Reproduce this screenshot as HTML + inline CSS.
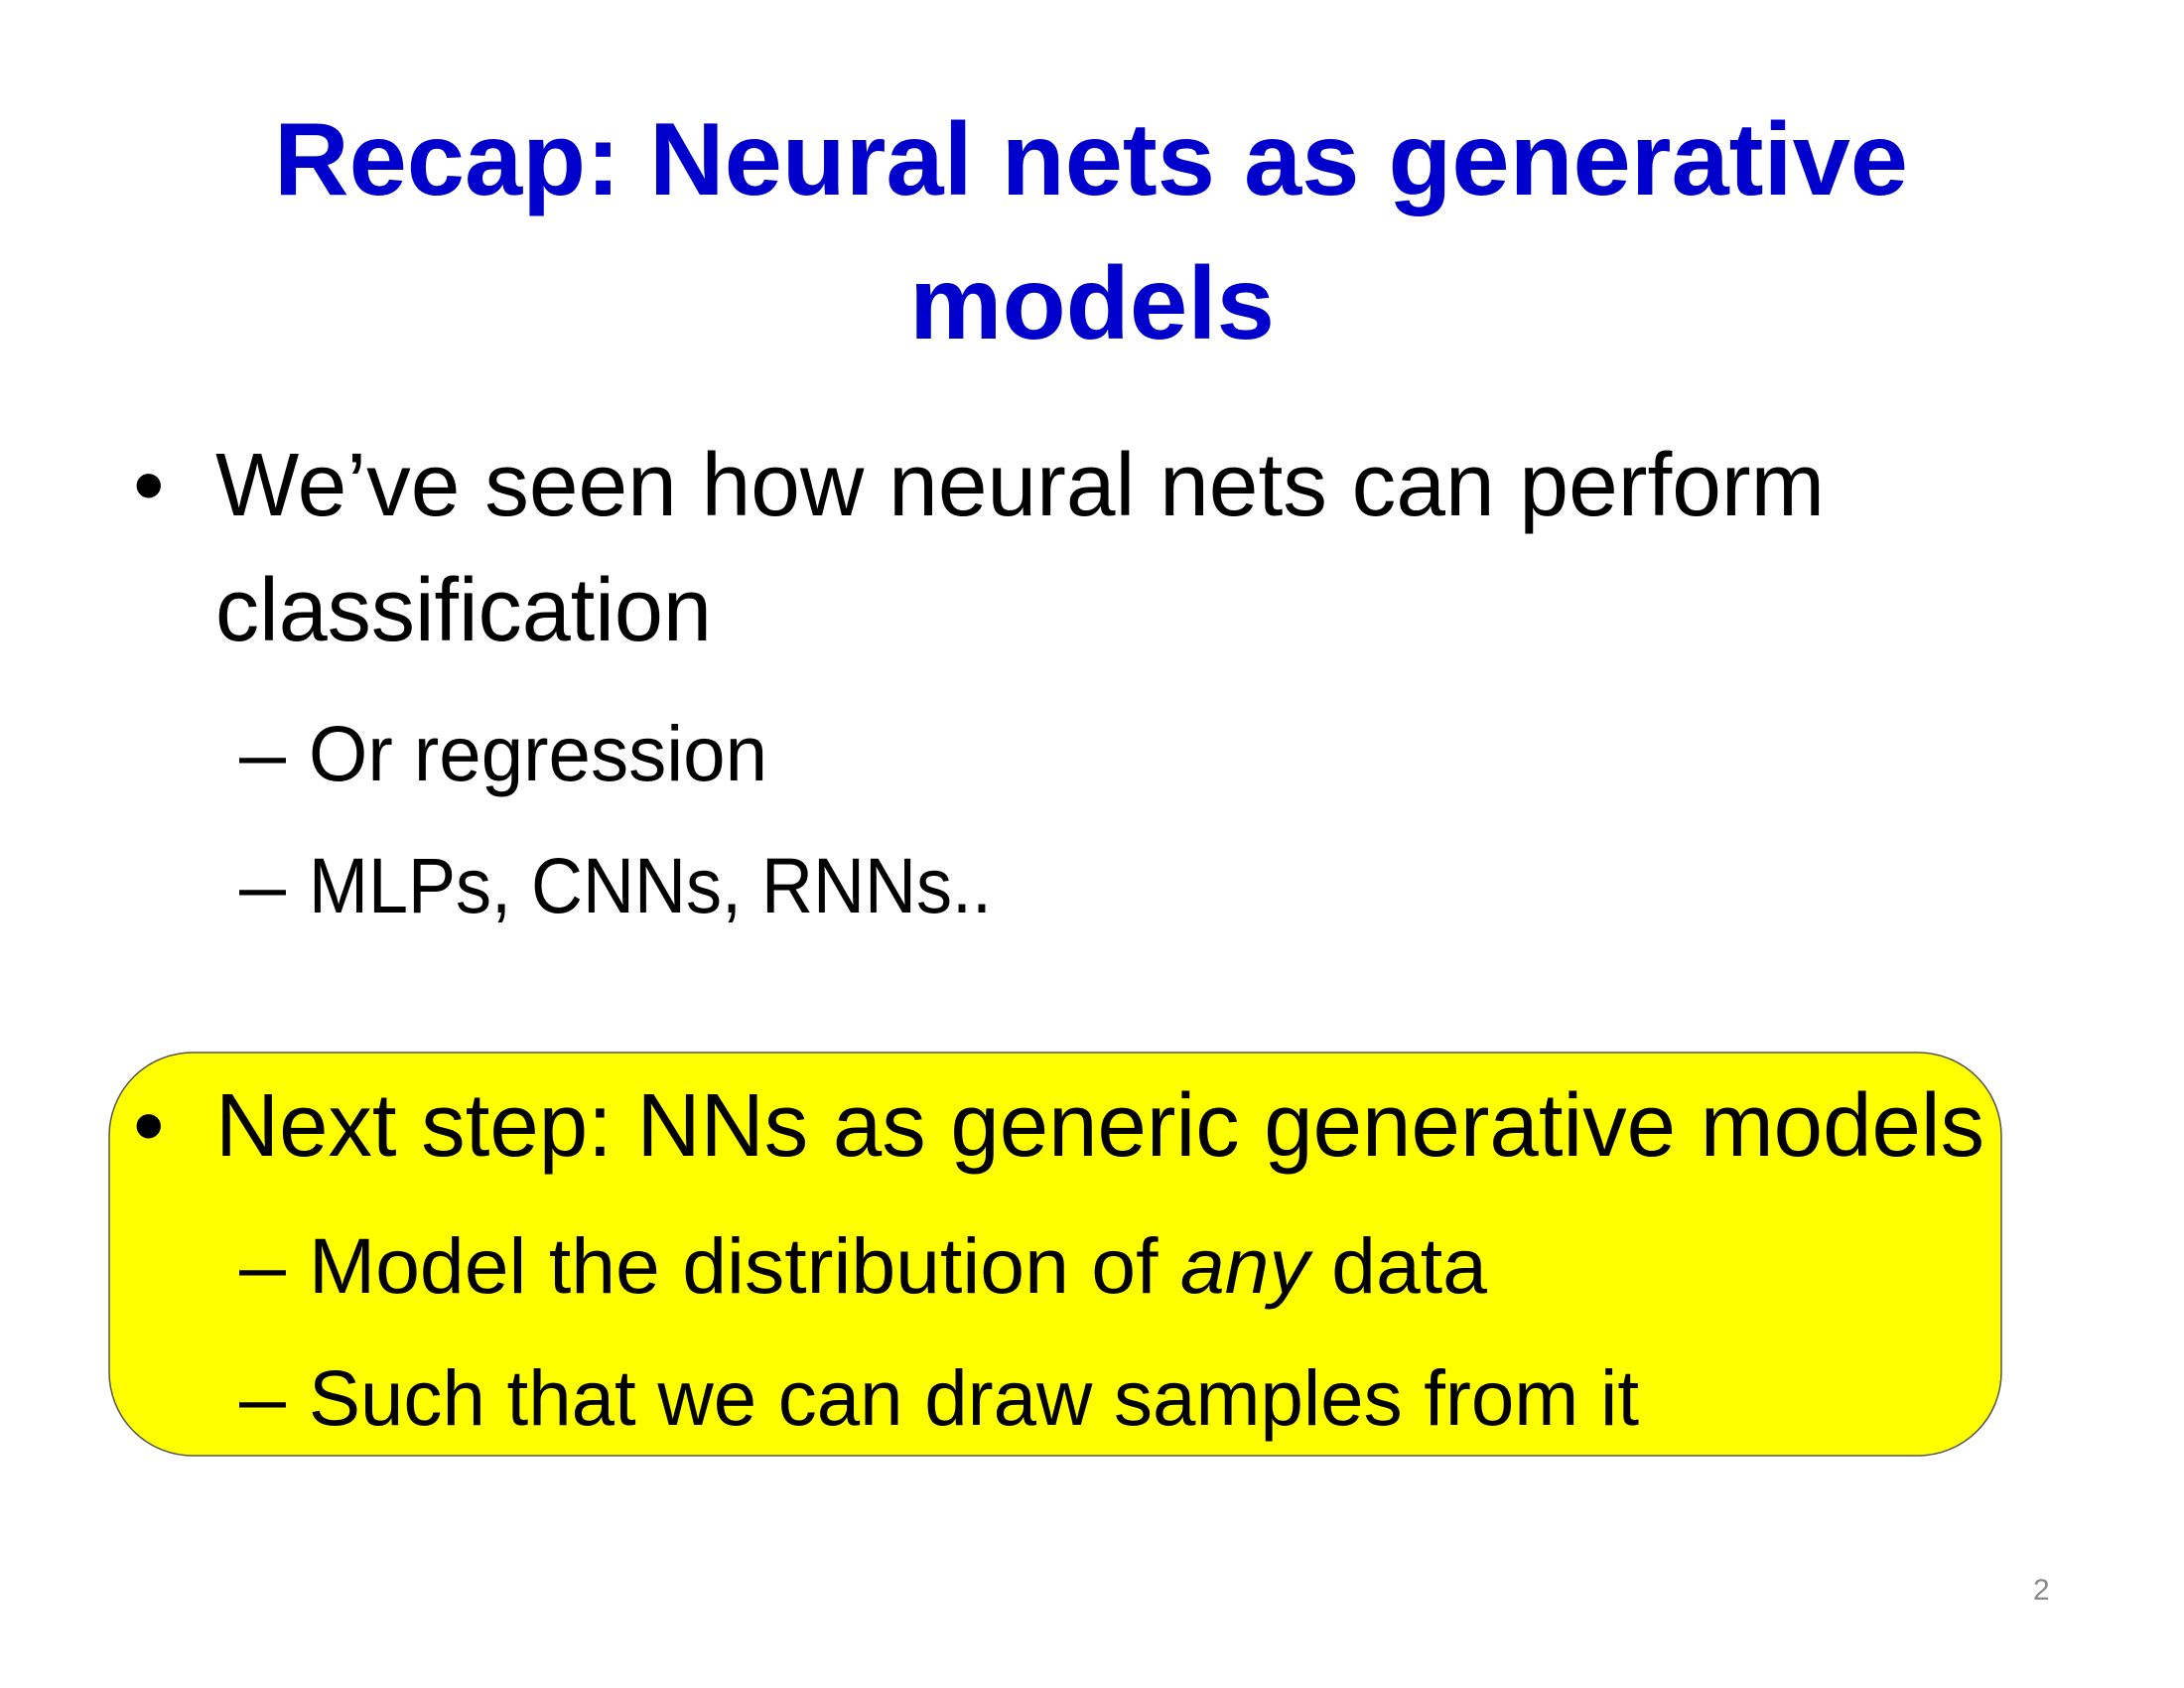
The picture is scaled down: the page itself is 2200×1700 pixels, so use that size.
<!DOCTYPE html>
<html><head><meta charset="utf-8"><style>html,body{margin:0;padding:0;background:#fff}svg{display:block}</style></head>
<body>
<svg width="2200" height="1700" viewBox="0 0 2200 1700" xmlns="http://www.w3.org/2000/svg" font-family="'Liberation Sans', sans-serif">
<rect width="2200" height="1700" fill="#fff"/>
<g fill="#0000CC" font-weight="bold" font-size="104">
<text x="276" y="196" textLength="1646" lengthAdjust="spacingAndGlyphs">Recap: Neural nets as generative</text>
<text x="916" y="341" textLength="368" lengthAdjust="spacingAndGlyphs">models</text>
</g>
<rect x="110" y="1060" width="1906" height="406" rx="84" ry="84" fill="#FFFF00" stroke="#555" stroke-width="1.5"/>
<g fill="#000" font-size="90">
<text x="134" y="519">•</text>
<text x="217" y="519" textLength="1621" lengthAdjust="spacingAndGlyphs">We’ve seen how neural nets can perform</text>
<text x="217" y="645" textLength="500" lengthAdjust="spacingAndGlyphs">classification</text>
<text x="134" y="1164">•</text>
<text x="217" y="1164" textLength="1782" lengthAdjust="spacingAndGlyphs">Next step:  NNs as generic generative models</text>
</g>
<g fill="#000" font-size="79">
<text x="241" y="786" textLength="47" lengthAdjust="spacingAndGlyphs">–</text>
<text x="311" y="786" textLength="462" lengthAdjust="spacingAndGlyphs">Or regression</text>
<text x="241" y="919" textLength="47" lengthAdjust="spacingAndGlyphs">–</text>
<text x="311" y="919" textLength="688" lengthAdjust="spacingAndGlyphs">MLPs, CNNs, RNNs..</text>
<text x="241" y="1302" textLength="47" lengthAdjust="spacingAndGlyphs">–</text>
<text x="311" y="1302" textLength="1187" lengthAdjust="spacingAndGlyphs">Model the distribution of <tspan font-style="italic">any</tspan> data</text>
<text x="241" y="1435" textLength="47" lengthAdjust="spacingAndGlyphs">–</text>
<text x="311" y="1435" textLength="1340" lengthAdjust="spacingAndGlyphs">Such that we can draw samples from it</text>
</g>
<text x="2048" y="1611" font-size="30" fill="#888">2</text>
</svg>
</body></html>
